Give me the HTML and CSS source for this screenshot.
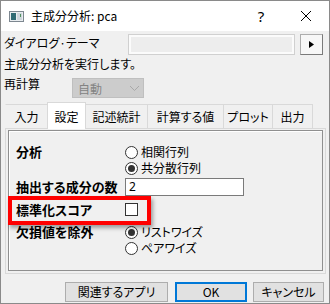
FILE: index.html
```html
<!DOCTYPE html>
<html lang="ja">
<head>
  <meta charset="UTF-8">
  <title>主成分分析: pca</title>
  <link rel="stylesheet" href="styles.css">
</head>
<body>

  <div class="window">
    <div class="titlebar">
      <svg class="app-icon" width="15" height="11" viewBox="0 0 15 11">
        <rect x="0.5" y="0.5" width="14" height="10" fill="#e9edf0" stroke="#7d8790"/>
        <rect x="2" y="2" width="5" height="7" fill="#2f6a73"/>
        <rect x="8" y="2" width="5" height="7" fill="#cdd6dc"/>
        <rect x="11" y="3" width="1" height="3" fill="#4f8f5d"/>
      </svg>
      <span class="title">主成分分析: pca</span>
      <span class="caption-btn help">?</span>
      <span class="caption-btn">
        <svg width="10" height="10" viewBox="0 0 10 10">
          <path d="M0 0 L10 10 M10 0 L0 10" stroke="#000" stroke-width="1"/>
        </svg>
      </span>
    </div>

    <div class="content">
      <div class="theme-row">
        <span class="theme-label">ダイアログ·テーマ</span>
        <div class="theme-box"></div>
        <div class="arrow-btn">
          <svg width="5" height="7" viewBox="0 0 5 7"><path d="M0 0 L5 3.5 L0 7 Z" fill="#000"/></svg>
        </div>
      </div>

      <p class="desc">主成分分析を実行します。</p>

      <div class="recalc-row">
        <span class="recalc-label">再計算</span>
        <div class="combo">
          <span>自動</span>
          <svg width="9" height="5" viewBox="0 0 9 5"><path d="M0 0 L4.5 4.5 L9 0" fill="none" stroke="#a8a8a8"/></svg>
        </div>
      </div>

      <div class="tabs">
        <div class="tab tab-input">入力</div>
        <div class="tab tab-settings active">設定</div>
        <div class="tab tab-stats">記述統計</div>
        <div class="tab tab-values">計算する値</div>
        <div class="tab tab-plot">プロット</div>
        <div class="tab tab-output">出力</div>
      </div>

      <div class="page">
        <div class="group">
          <div class="row first">
            <div class="field-label">分析</div>
            <div class="options">
              <div class="radio"><span class="circle"></span>相関行列</div>
              <div class="radio"><span class="circle checked"></span>共分散行列</div>
            </div>
          </div>
          <div class="row tight">
            <div class="field-label">抽出する成分の数</div>
            <div class="text-input">2</div>
          </div>
          <div class="row">
            <div class="field-label">標準化スコア</div>
            <span class="checkbox"></span>
          </div>
          <div class="row">
            <div class="field-label">欠損値を除外</div>
            <div class="options">
              <div class="radio"><span class="circle checked"></span>リストワイズ</div>
              <div class="radio"><span class="circle"></span>ペアワイズ</div>
            </div>
          </div>
        </div>
      </div>

      <div class="buttons">
        <div class="btn wide">関連するアプリ</div>
        <div class="btn default">OK</div>
        <div class="btn">キャンセル</div>
      </div>
    </div>

    <div class="highlight"></div>
  </div>

</body>
</html>
```

FILE: styles.css
```css
body {
  margin: 0;
  font-family: "Noto Sans CJK JP", "Noto Sans", sans-serif;
  font-size: 12px;
  font-feature-settings: "palt";
  color: #000;
}

.window {
  position: relative;
  width: 330px;
  height: 304px;
  box-sizing: border-box;
  border: 1px solid #8a8a8a;
  background: #f0f0f0;
}

/* title bar */
.titlebar {
  height: 30px;
  background: #fff;
  display: flex;
  align-items: center;
  padding-left: 8px;
}

.app-icon {
  margin-right: 7px;
}

.title {
  line-height: 16px;
}

.caption-btn {
  width: 46px;
  height: 30px;
  display: flex;
  align-items: center;
  justify-content: center;
}

.caption-btn.help {
  margin-left: auto;
  font-family: "Noto Sans", sans-serif;
  font-size: 15px;
  padding-left: 2px;
  box-sizing: border-box;
}

.content {
  padding: 0 5px 0 3px;
}

/* theme row */
.theme-row {
  display: flex;
  margin-top: 3px;
  height: 21px;
}

.theme-label {
  width: 124px;
  line-height: 16px;
  padding-top: 1px;
}

.theme-box {
  width: 167px;
  height: 21px;
  box-sizing: border-box;
  border: 1px solid #d0d0d0;
  background: #ededed;
  box-shadow: inset 0 0 0 2px #fbfbfb;
}

.arrow-btn {
  margin-left: 5px;
  width: 23px;
  height: 21px;
  box-sizing: border-box;
  border: 1px solid #adadad;
  border-right-color: #7a7a7a;
  border-bottom-color: #7a7a7a;
  background: #f7f7f7;
  display: flex;
  align-items: center;
  justify-content: center;
}

.desc {
  margin: 1px 0 0;
  line-height: 16px;
}

/* recalc */
.recalc-row {
  display: flex;
  margin-top: 4px;
  height: 22px;
}

.recalc-label {
  width: 68px;
  line-height: 16px;
}

.combo {
  margin-top: 2px;
  width: 72px;
  height: 20px;
  box-sizing: border-box;
  border: 1px solid #bfbfbf;
  background: #cccccc;
  color: #838383;
  display: flex;
  align-items: center;
  justify-content: space-between;
  padding: 0 4px 0 5px;
}

/* tabs */
.tabs {
  display: flex;
  align-items: flex-end;
  margin-top: 4px;
  padding-left: 1px;
  height: 26px;
  position: relative;
  z-index: 1;
}

.tab {
  flex-shrink: 0;
  white-space: nowrap;
  height: 24px;
  box-sizing: border-box;
  border: 1px solid #d9d9d9;
  border-bottom: none;
  margin-left: -1px;
  text-align: center;
  line-height: 23px;
  background: #f0f0f0;
}

.tab-input { width: 43px; margin-left: 0; border-left-color: transparent; }
.tab-settings { width: 39px; }
.tab-stats { width: 63px; }
.tab-values { width: 77px; }
.tab-plot { width: 50px; }
.tab-output { width: 41px; }

.tab.active {
  position: relative;
  height: 27px;
  margin-bottom: -1px;
  background: #fff;
  padding-top: 1px;
  line-height: 25px;
}

.page {
  margin-left: 1px;
  width: 321px;
  height: 146px;
  box-sizing: border-box;
  border: 1px solid #d9d9d9;
  padding: 1px 2px 2px;
}

.group {
  height: 100%;
  box-sizing: border-box;
  border: 1px solid #8f8f8f;
  box-shadow: inset 1px 1px 0 #fff;
  padding: 13px 0 0 7px;
}

.row {
  display: flex;
  margin-top: 6px;
}

.row.first {
  margin-top: 0;
}

.row.tight {
  margin-top: 2px;
  align-items: center;
}

.field-label {
  width: 109px;
  font-size: 13px;
  font-weight: bold;
  line-height: 16px;
}

.radio {
  display: flex;
  align-items: center;
  height: 16px;
  line-height: 16px;
}

.circle {
  width: 13px;
  height: 13px;
  box-sizing: border-box;
  border: 1px solid #333;
  border-radius: 50%;
  background: #fff;
  margin-right: 3px;
  display: flex;
  align-items: center;
  justify-content: center;
}

.circle.checked::after {
  content: "";
  width: 7px;
  height: 7px;
  border-radius: 50%;
  background: #333;
}

.text-input {
  width: 119px;
  height: 18px;
  box-sizing: border-box;
  border: 1px solid #7a7a7a;
  background: #fff;
  padding-left: 3px;
  line-height: 16px;
  font-family: "Noto Sans", sans-serif;
}

.checkbox {
  margin-top: 1px;
  width: 13px;
  height: 13px;
  box-sizing: border-box;
  border: 1px solid #333;
  background: #fff;
}

/* bottom buttons */
.buttons {
  display: flex;
  justify-content: flex-end;
  gap: 6px;
  margin-top: 8px;
}

.btn {
  width: 71px;
  height: 20px;
  box-sizing: border-box;
  border: 1px solid #adadad;
  background: #e1e1e1;
  text-align: center;
  line-height: 18px;
}

.btn.wide {
  width: 103px;
  margin-right: 1px;
}

.btn.default {
  width: 72px;
  border: 2px solid #0078d7;
  line-height: 16px;
}

/* red annotation frame */
.highlight {
  position: absolute;
  left: 7px;
  top: 195px;
  width: 143px;
  height: 29px;
  box-sizing: border-box;
  border: 4px solid #f00;
  box-shadow: 2px 3px 4px rgba(0, 0, 0, 0.35);
}
```
